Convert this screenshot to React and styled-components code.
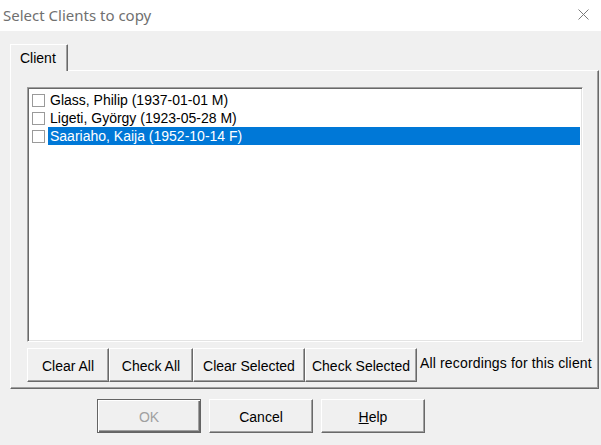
import React from "react";
import styled, { createGlobalStyle } from "styled-components";

const GlobalStyle = createGlobalStyle`
  html, body {
    margin: 0;
    padding: 0;
    background-color: #f0f0f0;
  }
`;

const clients = [
  { name: "Glass, Philip (1937-01-01 M)", selected: false },
  { name: "Ligeti, György (1923-05-28 M)", selected: false },
  { name: "Saariaho, Kaija (1952-10-14 F)", selected: true },
];

const App = () => {
  return (
    <>
      <GlobalStyle />
      <Dialog>
        <TitleBar>
          <Title>Select Clients to copy</Title>
          <CloseButton>
            <svg width="11" height="11" viewBox="0 0 11 11">
              <path d="M0.5 0.5 L10.5 10.5 M10.5 0.5 L0.5 10.5" stroke="#7a7a7a" strokeWidth="1" fill="none" />
            </svg>
          </CloseButton>
        </TitleBar>
        <Body>
          <TabStrip>
            <Tab>Client</Tab>
          </TabStrip>
          <TabPage>
            <ListBox>
              {clients.map((c) => (
                <Row key={c.name}>
                  <CheckBox />
                  <RowLabel $selected={c.selected}>{c.name}</RowLabel>
                </Row>
              ))}
            </ListBox>
            <ActionRow>
              <Button $w={82}>Clear All</Button>
              <Button $w={84}>Check All</Button>
              <Button $w={112}>Clear Selected</Button>
              <Button $w={112}>Check Selected</Button>
              <Note>All recordings for this client</Note>
            </ActionRow>
          </TabPage>
          <Footer>
            <DefaultButton disabled>OK</DefaultButton>
            <Button $w={104} $h={34}>Cancel</Button>
            <Button $w={104} $h={34}>
              <u>H</u>elp
            </Button>
          </Footer>
        </Body>
      </Dialog>
    </>
  );
};

export default App;

const Dialog = styled.div`
  width: 601px;
  height: 445px;
  display: flex;
  flex-direction: column;
  background-color: #f0f0f0;
  overflow: hidden;
`;

const TitleBar = styled.div`
  height: 31px;
  flex-shrink: 0;
  background-color: #ffffff;
  display: flex;
  align-items: center;
  justify-content: space-between;
  padding: 0 12px 0 3px;
`;

const Title = styled.div`
  font-family: "Noto Sans", sans-serif;
  font-size: 15px;
  color: #707070;
  margin-top: -2px;
`;

const CloseButton = styled.div`
  display: flex;
  align-items: center;
  margin-top: -2px;
`;

const Body = styled.div`
  flex: 1;
  display: flex;
  flex-direction: column;
  padding: 13px 2px 0 10px;
  font-family: "Liberation Sans", Arial, sans-serif;
  font-size: 14px;
  color: #000;
`;

const TabStrip = styled.div`
  display: flex;
  height: 27px;
  position: relative;
  z-index: 1;
  margin-bottom: -1px;
`;

const Tab = styled.div`
  width: 58px;
  height: 27px;
  box-sizing: border-box;
  background-color: #f0f0f0;
  border-top: 1px solid #ffffff;
  border-left: 1px solid #ffffff;
  border-right: 1px solid #696969;
  box-shadow: inset -1px 0 0 #a0a0a0;
  border-top-right-radius: 1px;
  padding: 5px 0 0 9px;
`;

const TabPage = styled.div`
  height: 319px;
  box-sizing: border-box;
  border-top: 1px solid #ffffff;
  border-left: 1px solid #ffffff;
  border-right: 1px solid #696969;
  border-bottom: 1px solid #696969;
  box-shadow: inset -1px -1px 0 #a0a0a0;
  padding: 16px 0 0 16px;
  display: flex;
  flex-direction: column;
`;

const ListBox = styled.div`
  width: 556px;
  height: 255px;
  box-sizing: border-box;
  background-color: #ffffff;
  border-top: 1px solid #a0a0a0;
  border-left: 1px solid #a0a0a0;
  border-right: 1px solid #ffffff;
  border-bottom: 1px solid #ffffff;
  box-shadow: inset 1px 1px 0 #696969, inset -1px -1px 0 #e3e3e3;
  padding: 3px 2px 0 4px;
`;

const Row = styled.div`
  display: flex;
  align-items: center;
  height: 18px;
`;

const CheckBox = styled.span`
  width: 13px;
  height: 13px;
  box-sizing: border-box;
  border: 1px solid #9a9a9a;
  background-color: #ffffff;
  flex-shrink: 0;
  margin-right: 3px;
`;

const RowLabel = styled.span`
  flex: 1;
  height: 18px;
  line-height: 18px;
  padding-left: 2px;
  background-color: ${(p) => (p.$selected ? "#0078d7" : "transparent")};
  color: ${(p) => (p.$selected ? "#ffffff" : "#000000")};
  white-space: nowrap;
`;

const ActionRow = styled.div`
  display: flex;
  align-items: center;
  margin-top: 6px;
`;

const Button = styled.button`
  width: ${(p) => p.$w}px;
  height: ${(p) => p.$h || 34}px;
  box-sizing: border-box;
  background-color: #f0f0f0;
  border-top: 1px solid #ffffff;
  border-left: 1px solid #ffffff;
  border-right: 1px solid #696969;
  border-bottom: 1px solid #696969;
  box-shadow: inset -1px -1px 0 #a0a0a0;
  font-family: "Liberation Sans", Arial, sans-serif;
  font-size: 14px;
  color: #000;
  padding: 2px 0 0;
  u {
    text-decoration: underline;
  }
`;

const DefaultButton = styled(Button).attrs({ $w: 104, $h: 34 })`
  border: 1px solid #646464;
  box-shadow: inset 1px 1px 0 #ffffff, inset -1px -1px 0 #696969, inset -2px -2px 0 #a0a0a0;
  color: #a0a0a0;
`;

const Note = styled.div`
  margin-left: 3px;
  margin-top: -4px;
  white-space: nowrap;
  letter-spacing: 0.15px;
`;

const Footer = styled.div`
  display: flex;
  gap: 8px;
  margin-top: 10px;
  padding-left: 87px;
`;
